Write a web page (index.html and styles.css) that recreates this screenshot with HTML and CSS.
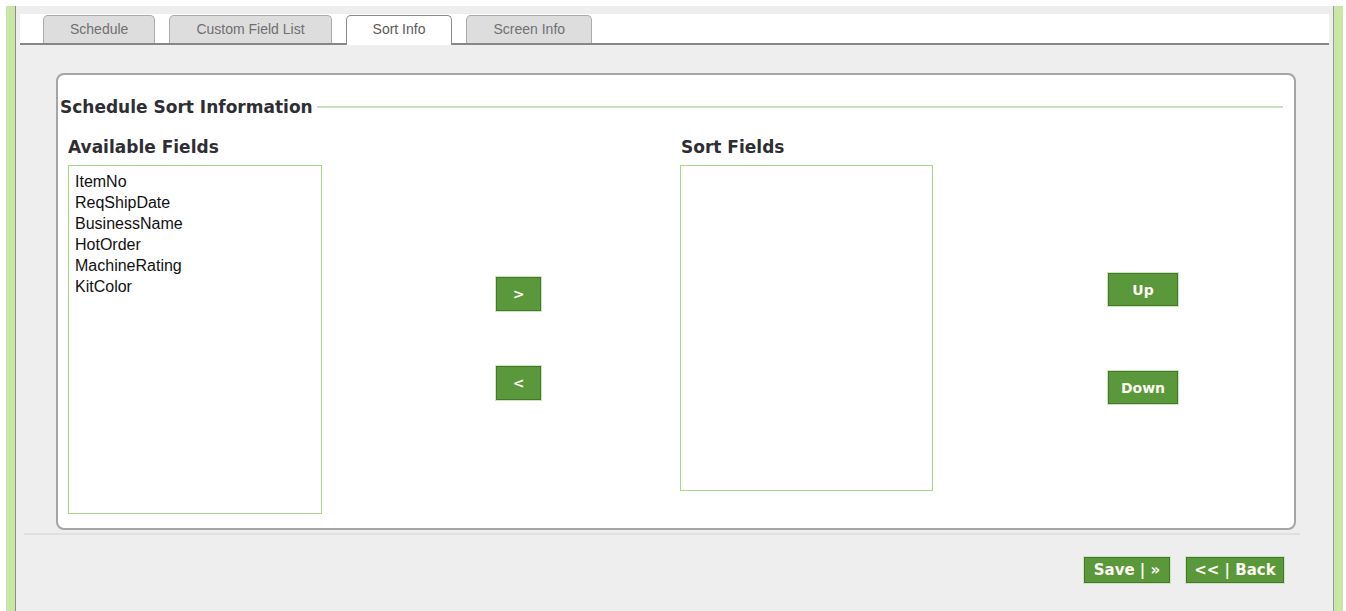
FILE: index.html
```html
<!DOCTYPE html>
<html lang="en">
<head>
<meta charset="utf-8">
<title>Sort Info</title>
<link rel="stylesheet" href="styles.css">
</head>
<body>
<div class="frame">
  <div class="content">
    <div class="tabs">
      <div class="tab">Schedule</div>
      <div class="tab">Custom Field List</div>
      <div class="tab active">Sort Info</div>
      <div class="tab">Screen Info</div>
    </div>

    <div class="sheet">
      <div class="panel">
        <div class="legend">
          <span class="legend-title">Schedule Sort Information</span>
          <span class="legend-rule"></span>
        </div>

        <div class="columns">
          <div class="col col-available">
            <h3 class="col-title">Available Fields</h3>
            <div class="listbox listbox-tall">
              <div class="option">ItemNo</div>
              <div class="option">ReqShipDate</div>
              <div class="option">BusinessName</div>
              <div class="option">HotOrder</div>
              <div class="option">MachineRating</div>
              <div class="option">KitColor</div>
            </div>
          </div>

          <div class="col col-move">
            <button class="btn btn-move">&gt;</button>
            <button class="btn btn-move">&lt;</button>
          </div>

          <div class="col col-sort">
            <h3 class="col-title col-title-sort">Sort Fields</h3>
            <div class="listbox listbox-short"></div>
          </div>

          <div class="col col-order">
            <button class="btn btn-order">Up</button>
            <button class="btn btn-order">Down</button>
          </div>
        </div>
      </div>
    </div>

    <div class="footer">
      <button class="btn btn-save">Save | &raquo;</button>
      <button class="btn btn-back">&lt;&lt; | Back</button>
    </div>
  </div>
</div>
</body>
</html>
```

FILE: styles.css
```css
* {
  box-sizing: border-box;
}

html,
body {
  margin: 0;
  padding: 0;
  background: #ffffff;
  overflow: hidden;
}

body {
  font-family: "Liberation Sans", Arial, sans-serif;
  color: #111;
}

/* outer page frame with the green side rails */
.frame {
  margin: 6px 3px 0 6px;
  height: 605px;
  border-left: 9px solid #c9e6a4;
  border-right: 9px solid #c9e6a4;
  display: flex;
}

.content {
  flex: 1;
  background: #eeeeee;
  border-left: 1px solid #8c8c8c;
  border-right: 1px solid #9a9a9a;
  padding: 8px 4px 0 4px;
}

/* tab strip */
.tabs {
  display: flex;
  align-items: flex-end;
  gap: 14px;
  height: 31px;
  padding: 1px 0 0 23px;
  background: #ffffff;
  border-bottom: 2px solid #878787;
}

.tab {
  height: 28px;
  line-height: 27px;
  padding: 0 26px;
  font-size: 14px;
  color: #707070;
  background: #dddddd;
  border: 1px solid #ababab;
  border-bottom: none;
  border-radius: 5px 5px 0 0;
}

.tab.active {
  height: 30px;
  margin-bottom: -2px;
  color: #5a5a5a;
  background: #ffffff;
  border-color: #8a8a8a;
  padding: 0 26px;
}

/* form sheet */
.sheet {
  margin: 0 29px 0 4px;
  padding: 28px 4px 3px 32px;
  border-bottom: 2px solid #e0e0e0;
}

.panel {
  background: #ffffff;
  border: 2px solid #a5a5a5;
  border-radius: 8px;
  padding: 22px 11px 14px 2px;
}

.legend {
  display: flex;
  align-items: center;
  height: 20px;
}

.legend-title {
  font-family: "DejaVu Sans", Verdana, sans-serif;
  font-weight: bold;
  font-size: 17px;
  line-height: 20px;
  color: #2e2e33;
  white-space: nowrap;
}

.legend-rule {
  flex: 1;
  height: 2px;
  margin-left: 4px;
  background: #c9e0c2;
}

.columns {
  display: flex;
  align-items: flex-start;
  margin-top: 20px;
  padding-left: 8px;
}

.col-title {
  margin: 0 0 8px 0;
  font-family: "DejaVu Sans", Verdana, sans-serif;
  font-weight: bold;
  font-size: 17px;
  line-height: 20px;
  color: #2e2e33;
  white-space: nowrap;
}

.col-title-sort {
  padding-left: 1px;
}

.col-available {
  width: 254px;
}

.col-move {
  width: 45px;
  margin-left: 174px;
  padding-top: 140px;
  display: flex;
  flex-direction: column;
  gap: 55px;
}

.col-sort {
  width: 254px;
  margin-left: 139px;
}

.col-order {
  width: 71px;
  margin-left: 174px;
  padding-top: 136px;
  display: flex;
  flex-direction: column;
  gap: 65px;
}

.listbox {
  border: 1px solid #a7d887;
  background: #ffffff;
  padding: 5px 6px;
}

.listbox-tall {
  height: 349px;
}

.listbox-short {
  height: 326px;
  width: 253px;
}

.option {
  font-size: 16px;
  line-height: 21px;
  color: #111111;
  white-space: nowrap;
}

/* green action buttons */
.btn {
  display: block;
  margin: 0;
  padding: 0;
  background: #5a983b;
  border: 1px solid #3e7a27;
  box-shadow: 0 0 0 1px #cfe3c4;
  color: #fbfbf0;
  font-family: "DejaVu Sans", Verdana, sans-serif;
  font-weight: bold;
  font-size: 14px;
  text-align: center;
  cursor: pointer;
}

.btn-move {
  width: 45px;
  height: 34px;
  font-size: 14px;
}

.btn-order {
  width: 70px;
  height: 33px;
  font-size: 14px;
}

.footer {
  display: flex;
  justify-content: flex-end;
  gap: 16px;
  padding: 22px 45px 0 0;
}

.btn-save,
.btn-back {
  height: 26px;
  font-size: 15px;
  line-height: 24px;
}

.btn-save {
  width: 86px;
}

.btn-back {
  width: 98px;
}
```
